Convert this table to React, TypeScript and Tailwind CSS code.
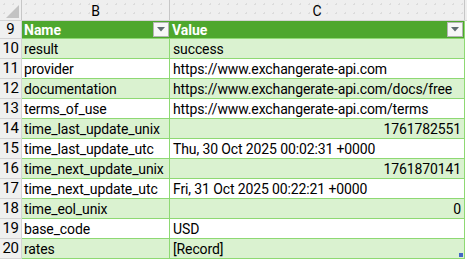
import React from "react";

type Row = { n: number; name: string; value: string; num?: boolean };

const rows: Row[] = [
  { n: 10, name: "result", value: "success" },
  { n: 11, name: "provider", value: "https://www.exchangerate-api.com" },
  { n: 12, name: "documentation", value: "https://www.exchangerate-api.com/docs/free" },
  { n: 13, name: "terms_of_use", value: "https://www.exchangerate-api.com/terms" },
  { n: 14, name: "time_last_update_unix", value: "1761782551", num: true },
  { n: 15, name: "time_last_update_utc", value: "Thu, 30 Oct 2025 00:02:31 +0000" },
  { n: 16, name: "time_next_update_unix", value: "1761870141", num: true },
  { n: 17, name: "time_next_update_utc", value: "Fri, 31 Oct 2025 00:22:21 +0000" },
  { n: 18, name: "time_eol_unix", value: "0", num: true },
  { n: 19, name: "base_code", value: "USD" },
  { n: 20, name: "rates", value: "[Record]" },
];

const dots =
  "bg-[#efefef] bg-[radial-gradient(#dcdcdc_1px,transparent_1px)] bg-[size:9px_9px]";

const FilterButton = () => (
  <div className="flex h-[15px] w-[16px] shrink-0 items-center justify-center border border-[#b4b4b4] bg-[#f7f7f7]">
    <svg width="8" height="5" viewBox="0 0 8 5">
      <polygon points="0,0 8,0 4,4.5" fill="#5f6b70" />
    </svg>
  </div>
);

export default function App() {
  return (
    <div className="h-[260px] w-[467px] overflow-hidden whitespace-nowrap bg-white text-[14px] leading-none text-black [font-family:Roboto,'Noto_Sans',sans-serif]">
      {/* column letters */}
      <div className="flex h-[21px] border-b border-[#d4d4d4]">
        <div className={`relative w-[22px] border-r border-[#c6c6c6] ${dots}`}>
          <svg className="absolute bottom-[2px] right-[2px]" width="13" height="13" viewBox="0 0 13 13">
            <polygon points="13,0 13,13 0,13" fill="#c3c3c3" />
          </svg>
        </div>
        <div className={`flex w-[148px] items-center justify-center border-r border-[#c6c6c6] pt-px text-[14px] ${dots}`}>
          B
        </div>
        <div className={`flex w-[295px] items-center justify-center border-r border-[#c6c6c6] pt-px text-[14px] ${dots}`}>
          C
        </div>
        <div className={`flex-1 ${dots}`} />
      </div>

      {/* table header */}
      <div className="flex h-[18px]">
        <div className="flex w-[22px] items-center justify-center border-r border-b border-[#d4d4d4] bg-[#f0f0f0] text-[15px]">
          9
        </div>
        <div className="flex w-[148px] items-center justify-between border-b border-[#8ed973] bg-[#4ea72e] pl-[2px] pr-[1px] font-bold text-white">
          <span>Name</span>
          <FilterButton />
        </div>
        <div className="flex w-[295px] items-center justify-between border-r border-b border-[#8ed973] bg-[#4ea72e] pl-[2px] pr-[1px] font-bold text-white">
          <span>Value</span>
          <FilterButton />
        </div>
        <div className="flex-1" />
      </div>

      {rows.map((r, i) => {
        const fill = i % 2 === 0 ? "bg-[#daf2d0]" : "bg-white";
        return (
          <div key={r.n} className="flex h-[20px] tracking-[-0.12px]">
            <div className="flex w-[22px] items-center justify-center border-r border-b border-[#d4d4d4] bg-[#f0f0f0] text-[15px] tracking-[-0.5px]">
              {r.n}
            </div>
            <div className={`flex w-[148px] items-center overflow-hidden border-r border-b border-[#8ed973] pl-[2px] ${fill}`}>
              {r.name}
            </div>
            <div
              className={`relative flex w-[295px] items-center border-r border-b border-[#8ed973] px-[3px] ${fill} ${
                r.num ? "justify-end" : ""
              }`}
            >
              {r.value}
              {r.n === 20 && (
                <div className="absolute bottom-[1px] right-[1px] h-[4px] w-[4px] bg-[#4468c4]" />
              )}
            </div>
            <div className="flex-1" />
          </div>
        );
      })}
    </div>
  );
}
